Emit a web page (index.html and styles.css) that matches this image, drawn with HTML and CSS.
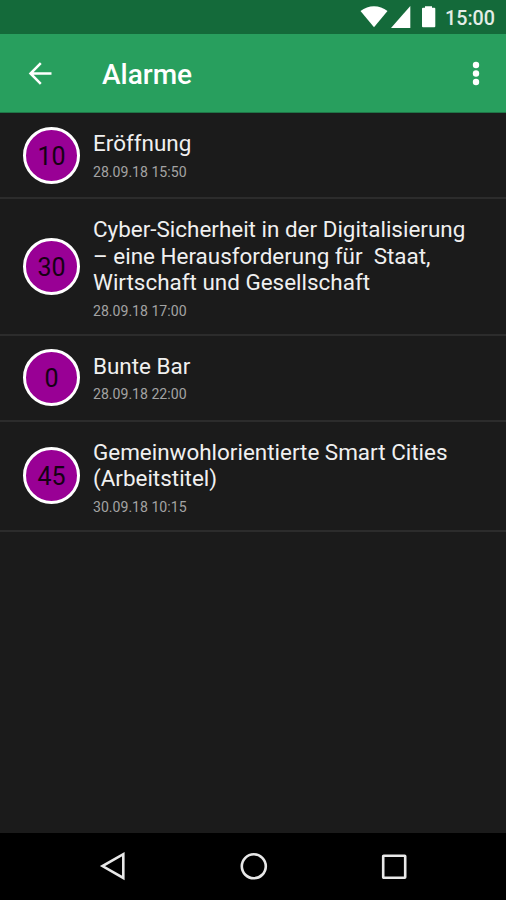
FILE: index.html
```html
<!DOCTYPE html>
<html lang="de">
<head>
<meta charset="utf-8">
<meta name="viewport" content="width=device-width">
<title>Alarme</title>
<link rel="stylesheet" href="styles.css">
</head>
<body>
<div class="screen">
  <div class="status">
    <svg class="signals" width="80" height="28" viewBox="0 0 80 28" fill="#fff">
      <path d="M.5 11C8.500 4.500 19.500 4.500 27.500 11L14 27.300Z"/>
      <path d="M50.300 6V28H31Z"/>
      <path d="M65 7.700V6.300h7v1.400h2.300q1 0 1 1V26.200q0 1-1 1H63q-1 0-1-1V8.700q0-1 1-1Z"/>
    </svg>
    <span class="clock">15:00</span>
  </div>
  <header class="appbar">
    <svg class="back" width="24" height="24" viewBox="0 0 24 24" fill="none" stroke="#fff" stroke-width="2.500"><path d="M12.800 2.200L2.500 12.500L12.800 22.800M2.500 12.500H23.500"/></svg>
    <h1 class="heading">Alarme</h1>
    <svg class="more" width="8" height="26" viewBox="0 0 8 26" fill="#fff"><circle cx="4" cy="5" r="3.200"/><circle cx="4" cy="13.500" r="3.200"/><circle cx="4" cy="22" r="3.200"/></svg>
  </header>
  <main class="alarms">
    <article class="alarm"><div class="badge">10</div><div class="info"><h2 class="title">Eröffnung</h2><p class="date">28.09.18 15:50</p></div></article>
    <article class="alarm large"><div class="badge">30</div><div class="info"><h2 class="title">Cyber-Sicherheit in der Digitalisierung
– eine Herausforderung für  Staat,
Wirtschaft und Gesellschaft</h2><p class="date">28.09.18 17:00</p></div></article>
    <article class="alarm"><div class="badge">0</div><div class="info"><h2 class="title">Bunte Bar</h2><p class="date">28.09.18 22:00</p></div></article>
    <article class="alarm medium"><div class="badge">45</div><div class="info"><h2 class="title">Gemeinwohlorientierte Smart Cities
(Arbeitstitel)</h2><p class="date">30.09.18 10:15</p></div></article>
  </main>
  <nav class="navbar">
    <svg width="30" height="30" viewBox="0 0 30 30"><path d="M25.300 3.200V27L4.500 15.100Z"/></svg>
    <svg width="30" height="30" viewBox="0 0 30 30"><circle cx="14.800" cy="15.300" r="12"/></svg>
    <svg width="30" height="30" viewBox="0 0 30 30"><rect x="4.200" y="4.700" width="22" height="22" rx=".5"/></svg>
  </nav>
</div>
</body>
</html>
```
FILE: styles.css
```css
* { box-sizing: border-box; }
body { margin: 0; background: #1b1b1b; font-family: Roboto, sans-serif; }
h1, h2, p { margin: 0; }
svg { display: block; flex: none; }
.screen { height: 900px; display: flex; flex-direction: column; overflow: hidden; }
.status { height: 34px; background: #146a3a; display: flex; justify-content: flex-end; padding-right: 11px; color: #fff; }
.signals { height: 28px; width: 80px; }
.clock { margin-left: 5px; font-size: 19.700px; line-height: 37px; font-weight: 500; color: #e3ede6; }
.appbar { height: 79px; background: #289f5e; border-bottom: 1px solid #1f7547; display: flex; align-items: center; padding: 0 26px 0 28px; color: #fff; }
.heading { font-size: 28px; line-height: 34px; font-weight: 500; margin-left: 50px; padding-top: 3px; flex: 1; }
.alarms { flex: 1; }
.alarm { height: 86px; border-bottom: 2px solid #2c2c2c; display: flex; align-items: center; padding-left: 23px; }
.alarm.large { height: 136.500px; }
.alarm.medium { height: 110px; }
.badge { width: 57px; height: 57px; flex: none; border: 3.500px solid #fff; border-radius: 50%; background: #990095; color: #160014; font-size: 25px; display: flex; align-items: center; justify-content: center; padding-top: 2px; }
.info { margin-left: 13px; padding-top: 1px; }
.large .info, .medium .info { padding-top: 3px; }
.title { font-size: 22.450px; line-height: 26.500px; font-weight: 400; color: #f0f0f0; white-space: pre; }
.date { font-size: 14.100px; line-height: 17px; margin-top: 7px; color: #a3a3a3; }
.navbar { height: 67px; background: #000; display: flex; justify-content: space-between; padding: 18px 97px 0 98px; fill: none; stroke: #e8e8e8; stroke-width: 2.600; }
```
